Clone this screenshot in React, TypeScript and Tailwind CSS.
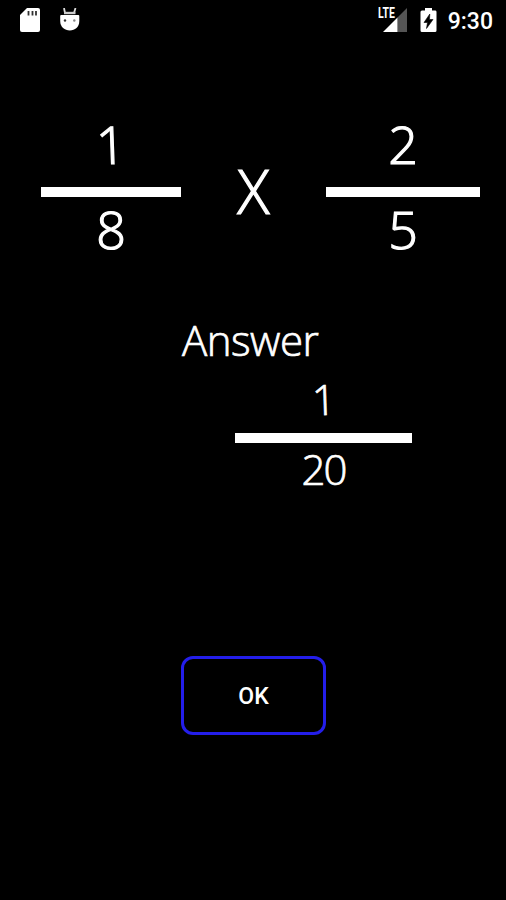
import React from 'react';

interface FractionProps {
  top: string;
  bottom: string;
  className?: string;
}

function Fraction({ top, bottom, className = '' }: FractionProps) {
  return (
    <div className={`flex flex-col items-center text-[52px] leading-[54px] ${className}`}>
      <span className={top === '1' ? '-rotate-2' : ''}>{top}</span>
      <div className="mt-4 mb-[5px] h-2.5 w-full bg-white" />
      <span>{bottom}</span>
    </div>
  );
}

function StatusBar() {
  return (
    <header className="flex h-11 items-start justify-between pl-5 pr-[13px] pt-2">
      <div className="flex items-start gap-[19px]">
        <svg width="21" height="25" viewBox="0 0 21 25">
          <path d="M7 0H18Q20 0 20 2V22Q20 24 18 24H2Q0 24 0 22V7Z" fill="#fff" />
          <path d="M8.5 3v4.5M12.5 3v4.5M16 3v4.5" stroke="#333" strokeWidth="1.8" />
        </svg>
        <svg width="20" height="25" viewBox="0 0 20 25">
          <path d="M4 0 5 5M15.5 0 14 5" stroke="#ddd" strokeWidth="1.8" />
          <path d="M4 3.8H15.5V6.2H4Z" fill="#ccc" />
          <path d="M.2 8Q.2 7 1.2 7H18.3Q19.3 7 19.3 8V13C19.3 19 15 22.5 9.8 22.5S.2 19 .2 13Z" fill="#fff" />
          <circle cx="5" cy="12.5" r="1.2" fill="#333" />
          <circle cx="14.3" cy="12.5" r="1.2" fill="#888" />
        </svg>
      </div>
      <div className="flex items-start">
        <div className="relative mr-3 h-[25px] w-[30px]">
          <svg width="30" height="25" viewBox="0 0 30 25">
            <path d="M29 0V24H19.5V9.5Z" fill="#555" />
            <path d="M19.5 9.5V24H5Z" fill="#fff" />
          </svg>
          <span className="absolute left-0 top-0 origin-left scale-x-[.72] font-['Roboto'] text-[14.5px] font-bold leading-[12px]">
            LTE
          </span>
        </div>
        <svg width="17" height="25" viewBox="0 0 17 25">
          <path d="M5 0H12V2.5H15.5Q16.5 2.5 16.5 4V22.5Q16.5 24 15 24H2Q.5 24 .5 22.5V4Q.5 2.5 2 2.5H5Z" fill="#fff" />
          <path d="M9.8 6 4 14.5H7.5L6.5 20.5L13 11.5H9.5Z" fill="#000" stroke="#000" strokeWidth=".6" />
        </svg>
        <span className="ml-[11px] mt-0.5 font-['Roboto'] text-[23px] font-medium leading-6">9:30</span>
      </div>
    </header>
  );
}

export default function App() {
  return (
    <div className="flex h-[900px] w-[506px] flex-col overflow-hidden bg-black font-['Open_Sans',sans-serif] font-light text-white">
      <StatusBar />

      <main className="flex flex-col">
        <section className="mt-[73px] flex h-[140px] pl-[41px] [-webkit-text-stroke:1.2px_white] [stroke-linejoin:round]">
          <Fraction top="1" bottom="8" className="w-[140px]" />
          <span className="w-[145px] text-center text-[60px] leading-[149px]">X</span>
          <Fraction top="2" bottom="5" className="w-[154px]" />
        </section>

        <h1 className="mt-[58px] pl-[182px] text-[42px] leading-[50px] tracking-[-0.5px] [-webkit-text-stroke:0.7px_white]">
          Answer
        </h1>

        <section className="ml-[235px] mt-[9px] flex w-[177px] flex-col items-center text-[42px] leading-[50px] [-webkit-text-stroke:0.7px_white]">
          <span className="-rotate-2">1</span>
          <div className="mb-px mt-[9px] h-2.5 w-full bg-white" />
          <span className="tracking-[-2px]">20</span>
        </section>

        <button
          type="button"
          className="ml-[181px] mt-[162px] h-[79px] w-[145px] rounded-[12px] border-[3px] border-[#241eea] pt-1 font-['Roboto'] text-[23px] font-medium"
        >
          OK
        </button>
      </main>
    </div>
  );
}
